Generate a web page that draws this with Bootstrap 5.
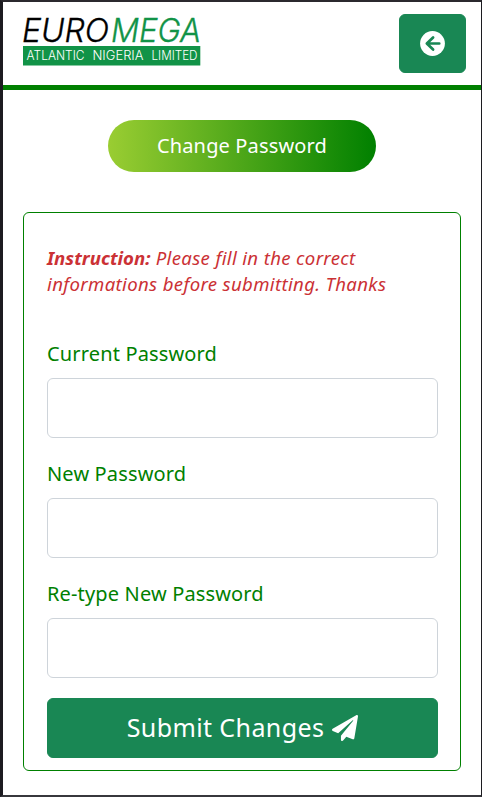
<!DOCTYPE html>
<html lang="en">
<head>
<meta charset="utf-8">
<meta name="viewport" content="width=device-width, initial-scale=1">
<title>Change Password</title>
<link rel="stylesheet" href="https://cdn.jsdelivr.net/npm/bootstrap@5.3.0/dist/css/bootstrap.min.css">
<style>
body{font-family:"Noto Sans","Open Sans",sans-serif;background:#fff}
.app-frame{height:797px;border:solid #1c1b20;border-width:2px 1px 2px 3px;border-top-color:#2b292e;border-bottom-color:#37373c}
.top-bar{height:88px;border-bottom:5px solid green;padding:12px 15px 0 20px}
.brand-logo{width:178px;height:50px;margin-top:3px;overflow:visible}
.back-btn{width:67px;height:59px}
.title-pill{width:268px;height:52px;margin-top:30px;background:linear-gradient(to right,yellowgreen,green);font-size:20px;letter-spacing:.15px}
.form-box{margin:40px 20px 0;height:559px;border:1px solid green;border-radius:6px;padding:32px 22px 0 23px}
.notice{color:#cb3135;font-size:18.6px;letter-spacing:.34px;line-height:26px;height:96px}
.notice strong{letter-spacing:0}
.form-label{color:green;font-size:20px;letter-spacing:.15px;line-height:26px;margin-bottom:11px}
.pw-input{height:60px;margin-bottom:23px;border-color:#ced4da}
.pw-last{margin-bottom:20px}
.send-btn{height:60px;font-size:25px;letter-spacing:.4px}
</style>
<script src="https://cdn.jsdelivr.net/npm/bootstrap@5.3.0/dist/js/bootstrap.bundle.min.js"></script>
</head>
<body>
<div class="app-frame">
  <header class="top-bar d-flex justify-content-between align-items-start">
    <svg class="brand-logo" viewBox="0 0 178 50" role="img" aria-label="Euromega Atlantic Nigeria Limited">
      <rect y="29" width="177.3" height="19.5" fill="#119347"/>
      <g font-family="Inter,sans-serif" font-style="italic" font-weight="300" font-size="32" stroke-width=".35">
        <text x="-1" y="24.8" textLength="87" lengthAdjust="spacingAndGlyphs" fill="#000" stroke="#000">EURO</text>
        <text x="88" y="24.8" textLength="90" lengthAdjust="spacingAndGlyphs" fill="#119347" stroke="#119347">MEGA</text>
      </g>
      <g font-family="Inter,sans-serif" font-weight="300" font-size="12.6" fill="#fff">
        <text x="3.5" y="43" textLength="58" lengthAdjust="spacingAndGlyphs">ATLANTIC</text>
        <text x="69.5" y="43" textLength="51" lengthAdjust="spacingAndGlyphs">NIGERIA</text>
        <text x="128.5" y="43" textLength="46" lengthAdjust="spacingAndGlyphs">LIMITED</text>
      </g>
    </svg>
    <button type="button" class="btn btn-success back-btn d-flex align-items-center justify-content-center p-0" aria-label="Back">
      <svg width="25" height="25" viewBox="0 0 512 512"><circle cx="256" cy="256" r="254" fill="#fff"/><path d="M268 132L140 256l128 124M146 256h248" fill="none" stroke="#198754" stroke-width="56" stroke-linecap="round" stroke-linejoin="round"/></svg>
    </button>
  </header>
  <main>
    <h1 class="title-pill rounded-pill text-white fw-normal d-flex align-items-center justify-content-center mx-auto mb-0">Change Password</h1>
    <form class="form-box">
      <p class="notice fst-italic mb-0"><strong>Instruction:</strong> Please fill in the correct<br>informations before submitting. Thanks</p>
      <label class="form-label d-block" for="cur">Current Password</label>
      <input type="password" class="form-control pw-input" id="cur">
      <label class="form-label d-block" for="new">New Password</label>
      <input type="password" class="form-control pw-input" id="new">
      <label class="form-label d-block" for="again">Re-type New Password</label>
      <input type="password" class="form-control pw-input pw-last" id="again">
      <button type="button" class="btn btn-success send-btn w-100 d-flex align-items-center justify-content-center gap-2 p-0">
        <span>Submit Changes</span>
        <svg width="26" height="26" viewBox="0 0 512 512" fill="currentColor"><path d="M476 3.2L12.5 270.6c-18.1 10.4-15.8 35.6 2.2 43.2L121 358.4l287.3-253.2c5.5-4.9 13.3 2.6 8.6 8.3L176 407v80.5c0 23.6 28.5 32.9 42.5 15.8L282 426l124.6 52.2c14.2 6 30.4-2.9 33-18.2l72-432C515 7.8 493.3-6.8 476 3.2z"/></svg>
      </button>
    </form>
  </main>
</div>
</body>
</html>
